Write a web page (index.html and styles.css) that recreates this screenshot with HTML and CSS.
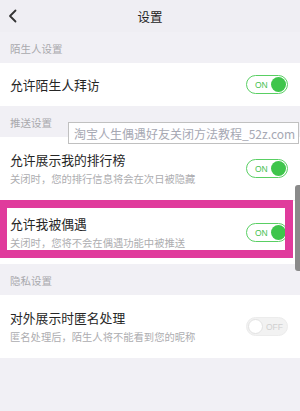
FILE: index.html
```html
<!DOCTYPE html>
<html lang="zh-CN">
<head>
<meta charset="utf-8">
<title>设置</title>
<link rel="stylesheet" href="styles.css">
</head>
<body>
<div class="page">
  <header class="nav">
    <span class="back">
      <svg width="10" height="14" viewBox="0 0 10 14"><path d="M7.5 1.5 L2 7 L7.5 12.5" fill="none" stroke="#333" stroke-width="1.8" stroke-linecap="round" stroke-linejoin="round"/></svg>
    </span>
    <span class="nav-title">设置</span>
    <span></span>
  </header>

  <div class="section-h">陌生人设置</div>
  <div class="row single">
    <div class="texts"><div class="title">允许陌生人拜访</div></div>
    <span class="toggle on"><span class="lbl">ON</span><span class="knob"></span></span>
  </div>

  <div class="section-h">推送设置</div>
  <div class="row double">
    <div class="texts">
      <div class="title">允许展示我的排行榜</div>
      <div class="sub">关闭时，您的排行信息将会在次日被隐藏</div>
    </div>
    <span class="toggle on"><span class="lbl">ON</span><span class="knob"></span></span>
  </div>
  <div class="row double sep">
    <div class="texts">
      <div class="title">允许我被偶遇</div>
      <div class="sub">关闭时，您将不会在偶遇功能中被推送</div>
    </div>
    <span class="toggle on"><span class="lbl">ON</span><span class="knob"></span></span>
  </div>

  <div class="section-h">隐私设置</div>
  <div class="row double">
    <div class="texts">
      <div class="title">对外展示时匿名处理</div>
      <div class="sub">匿名处理后，陌生人将不能看到您的昵称</div>
    </div>
    <span class="toggle off"><span class="knob"></span><span class="lbl">OFF</span></span>
  </div>

  <div class="highlight"></div>
  <div class="scrollbar"></div>
  <div class="watermark">淘宝人生偶遇好友关闭方法教程_52z.com</div>
</div>
</body>
</html>
```

FILE: styles.css
```css
html, body {
  margin: 0;
  padding: 0;
}
body {
  background: #f1f0f5;
  font-family: "Noto Sans CJK SC", "Noto Sans", sans-serif;
}
.page {
  position: relative;
  width: 300px;
  height: 411px;
  overflow: hidden;
  background: #f1f0f5;
}
.nav {
  height: 32px;
  display: grid;
  grid-template-columns: 40px 1fr 40px;
  align-items: center;
  background: #efeef3;
}
.back {
  display: flex;
  align-items: center;
  padding-left: 8px;
  height: 32px;
}
.nav-title {
  text-align: center;
  font-size: 12.5px;
  color: #222;
}
.section-h {
  height: 31px;
  display: flex;
  align-items: center;
  padding-left: 10px;
  padding-top: 2px;
  box-sizing: border-box;
  font-size: 10.5px;
  color: #a9a9ad;
}
.row {
  background: #fff;
  display: flex;
  align-items: center;
  justify-content: space-between;
  padding: 0 12px 0 10px;
}
.row.single { height: 43px; }
.row.double { height: 63px; }
.row.sep { border-top: 1px solid #f0f0f0; }
.title {
  font-size: 12.8px;
  line-height: 18px;
  color: #262626;
}
.sub {
  margin-top: 3px;
  font-size: 10.3px;
  line-height: 14px;
  color: #adadb0;
}
.toggle {
  width: 42px;
  height: 19px;
  box-sizing: border-box;
  border-radius: 10px;
  display: flex;
  align-items: center;
  padding: 0 1px 0 6px;
  flex-shrink: 0;
}
.toggle.on {
  border: 1.3px solid #59cf63;
  justify-content: space-between;
}
.toggle.on .lbl {
  font-family: "Liberation Sans", sans-serif;
  font-size: 8.5px;
  color: #45c152;
  padding-left: 2px;
}
.toggle.on .knob {
  width: 15px;
  height: 15px;
  border-radius: 50%;
  background: #3ec54b;
}
.toggle.off {
  background: #f2f2f2;
  border: 1px solid #ececec;
  padding: 0 4px 0 1px;
  justify-content: space-between;
}
.toggle.off .knob {
  width: 15px;
  height: 15px;
  box-sizing: border-box;
  border-radius: 50%;
  background: #fff;
  border: 1px solid #e2e2e2;
}
.toggle.off .lbl {
  font-family: "Liberation Sans", sans-serif;
  font-size: 8.5px;
  color: #d0d0d0;
}
.highlight {
  position: absolute;
  left: 0;
  top: 200px;
  width: 293px;
  height: 58px;
  box-sizing: border-box;
  border: 8px solid #e03b9c;
  border-left-width: 7px;
}
.scrollbar {
  position: absolute;
  right: 0;
  top: 185px;
  width: 5px;
  height: 86px;
  background: #8a8a8a;
  border-radius: 3px 0 0 3px;
}
.watermark {
  position: absolute;
  left: 68px;
  top: 122px;
  width: 231px;
  height: 22px;
  box-sizing: border-box;
  border: 1px solid #c0c0c0;
  background: rgba(255, 255, 255, 0.92);
  padding-left: 5px;
  display: flex;
  align-items: center;
  font-size: 12px;
  color: #a6a8b3;
  white-space: nowrap;
}
```
